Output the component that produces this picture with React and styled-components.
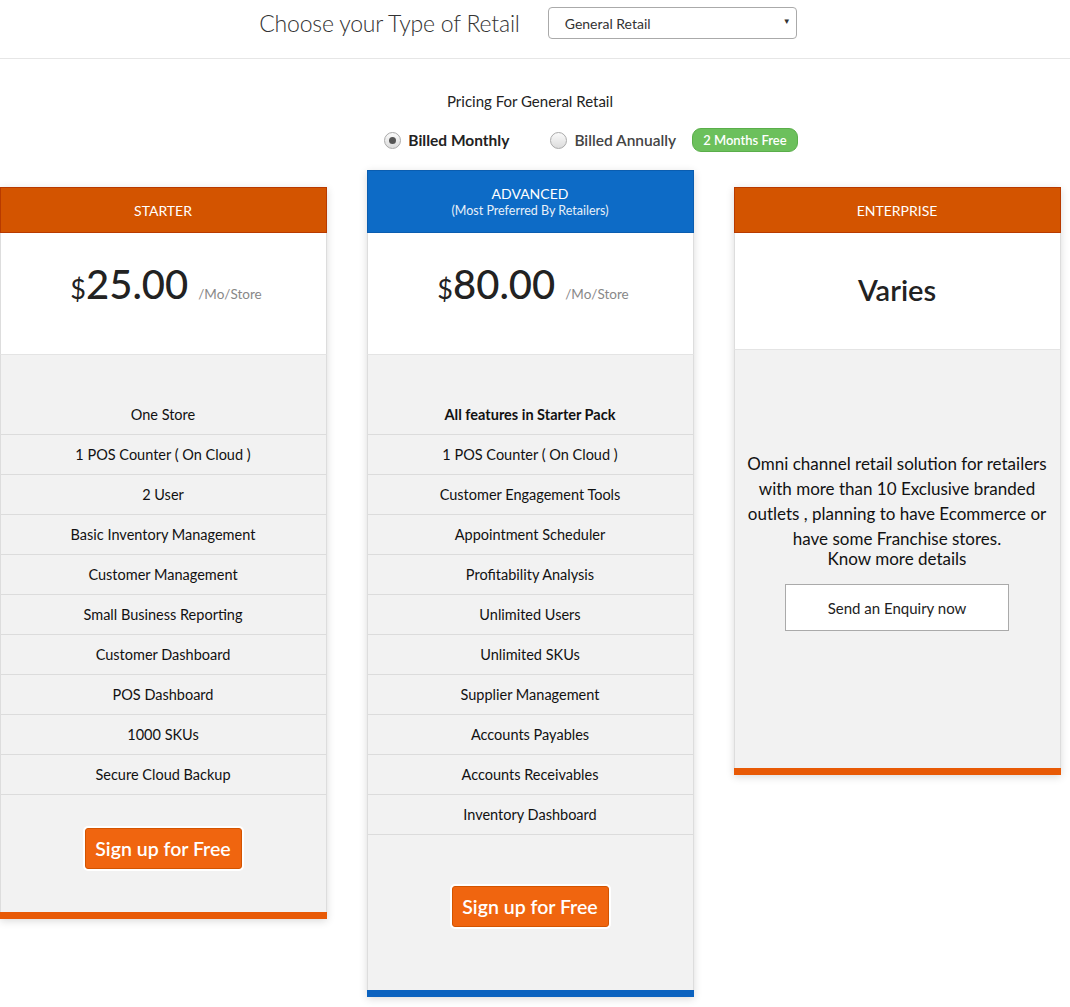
import React from "react";
import styled, { createGlobalStyle } from "styled-components";

const GlobalStyle = createGlobalStyle`
  html, body {
    margin: 0;
    padding: 0;
    background: #ffffff;
    font-family: Lato, "Noto Sans", "Liberation Sans", sans-serif;
    color: #222;
    overflow-x: hidden;
  }
`;

const ORANGE = "#d35400";
const BLUE = "#0d6bc6";

const Page = styled.div`
  width: 1070px;
  padding-bottom: 20px;
`;

const TopBar = styled.div`
  display: flex;
  align-items: center;
  justify-content: center;
  gap: 28px;
  height: 45px;
  padding: 0 14px 13px 0;
  border-bottom: 1px solid #e6e6e6;
`;

const TopTitle = styled.h1`
  margin: 0;
  font-weight: 300;
  font-size: 23px;
  color: #333;
  letter-spacing: -0.2px;
`;

const SelectBox = styled.div`
  position: relative;
  width: 231px;
  height: 30px;
  border: 1px solid #aaa;
  border-radius: 4px;
  padding-left: 16px;
  display: flex;
  align-items: center;
  font-size: 14px;
  color: #333;
  margin-top: 1px;
  &::after {
    content: "▼";
    position: absolute;
    right: 5px;
    top: 8px;
    font-size: 8px;
    color: #333;
  }
`;

const PricingHead = styled.div`
  display: flex;
  flex-direction: column;
  align-items: center;
  padding-top: 33px;
  padding-right: 10px;
`;

const PricingTitle = styled.div`
  font-size: 15px;
  color: #222;
`;

const BillingRow = styled.div`
  display: flex;
  align-items: center;
  margin-top: 18px;
  margin-left: 122px;
`;

const Radio = styled.span`
  display: inline-block;
  width: 15px;
  height: 15px;
  border-radius: 50%;
  border: 1px solid #aaa;
  background: linear-gradient(#fafafa, #dcdcdc);
  margin-right: 7px;
  position: relative;
  &::after {
    content: "";
    display: ${(p) => (p.checked ? "block" : "none")};
    position: absolute;
    left: 4px;
    top: 4px;
    width: 7px;
    height: 7px;
    border-radius: 50%;
    background: #555;
  }
`;

const BillLabel = styled.span`
  font-size: 15.5px;
  font-weight: ${(p) => (p.bold ? 700 : 600)};
  color: ${(p) => (p.bold ? "#222" : "#444")};
  margin-right: ${(p) => p.gap || 0}px;
`;

const Badge = styled.span`
  background: #6cc05c;
  color: #fff;
  font-size: 13px;
  font-weight: 600;
  border-radius: 9px;
  padding: 3px 10px;
  border: 1px solid #5aae4a;
`;

const Cards = styled.div`
  display: flex;
  justify-content: center;
  align-items: flex-start;
  gap: 40px;
  margin-top: 18px;
  padding-right: 10px;
`;

const Card = styled.div`
  width: 327px;
  flex-shrink: 0;
  margin-top: ${(p) => (p.featured ? 0 : 17)}px;
  box-shadow: 0 2px 8px rgba(0, 0, 0, 0.15);
  border-bottom: 7px solid ${(p) => p.accent};
`;

const CardHeader = styled.div`
  background: ${(p) => p.color};
  border: 1px solid ${(p) => (p.color === BLUE ? "#0a5db0" : "#b83a00")};
  color: #fff;
  height: ${(p) => (p.featured ? 61 : 44)}px;
  display: flex;
  flex-direction: column;
  align-items: center;
  justify-content: center;
  font-size: 14px;
  text-transform: uppercase;
`;

const SubTitle = styled.span`
  text-transform: none;
  font-size: 12.5px;
  opacity: 0.9;
  margin-top: 1px;
`;

const PriceBox = styled.div`
  background: #fff;
  height: ${(p) => p.h || 122}px;
  display: flex;
  align-items: center;
  justify-content: center;
  border-left: 1px solid #ddd;
  border-right: 1px solid #ddd;
  border-bottom: 1px solid #e4e4e4;
  box-sizing: border-box;
`;

const Price = styled.div`
  display: flex;
  align-items: baseline;
  margin-top: -19px;
  margin-left: 6px;
  color: #222;
`;

const Dollar = styled.span`
  font-size: 27px;
`;

const Amount = styled.span`
  font-size: 40px;
  font-weight: 500;
`;

const Per = styled.span`
  font-size: 13.5px;
  color: #888;
  margin-left: 10px;
`;

const Varies = styled.div`
  font-size: 29px;
  font-weight: 600;
  color: #222;
  margin-top: -4px;
`;

const Body = styled.div`
  background: #f2f2f2;
  border-left: 1px solid #ddd;
  border-right: 1px solid #ddd;
  padding-top: ${(p) => p.pt || 40}px;
  padding-bottom: ${(p) => p.pb || 0}px;
  display: flex;
  flex-direction: column;
  align-items: center;
`;

const FeatureList = styled.ul`
  list-style: none;
  margin: 0;
  padding: 0;
  width: 100%;
`;

const Feature = styled.li`
  height: 40px;
  line-height: 40px;
  text-align: center;
  font-size: 14.5px;
  font-weight: ${(p) => (p.bold ? 700 : 400)};
  color: #111;
  border-bottom: 1px solid #dcdcdc;
  box-sizing: border-box;
`;

const SignUp = styled.button`
  margin-top: ${(p) => p.mt}px;
  height: 41px;
  width: 157px;
  background: #f0650f;
  border: 1px solid #d35400;
  border-radius: 3px;
  box-shadow: 0 0 0 2px #fff;
  color: #fff;
  font-family: inherit;
  font-size: 19.5px;
  font-weight: 600;
  cursor: pointer;
`;

const EntText = styled.p`
  margin: 0;
  padding: 0 8px;
  text-align: center;
  font-size: 17px;
  line-height: 25px;
  color: #111;
`;

const KnowMore = styled.span`
  display: block;
  line-height: 16px;
`;

const Enquiry = styled.button`
  margin-top: 17px;
  width: 224px;
  height: 47px;
  background: #fff;
  border: 1px solid #aaa;
  font-family: inherit;
  font-size: 15px;
  color: #222;
  cursor: pointer;
`;

const starter = [
  "One Store",
  "1 POS Counter ( On Cloud )",
  "2 User",
  "Basic Inventory Management",
  "Customer Management",
  "Small Business Reporting",
  "Customer Dashboard",
  "POS Dashboard",
  "1000 SKUs",
  "Secure Cloud Backup",
];

const advanced = [
  "All features in Starter Pack",
  "1 POS Counter ( On Cloud )",
  "Customer Engagement Tools",
  "Appointment Scheduler",
  "Profitability Analysis",
  "Unlimited Users",
  "Unlimited SKUs",
  "Supplier Management",
  "Accounts Payables",
  "Accounts Receivables",
  "Inventory Dashboard",
];

export default function App() {
  return (
    <Page>
      <GlobalStyle />
      <TopBar>
        <TopTitle>Choose your Type of Retail</TopTitle>
        <SelectBox>General Retail</SelectBox>
      </TopBar>

      <PricingHead>
        <PricingTitle>Pricing For General Retail</PricingTitle>
        <BillingRow>
          <Radio checked />
          <BillLabel bold gap={41}>Billed Monthly</BillLabel>
          <Radio />
          <BillLabel gap={16}>Billed Annually</BillLabel>
          <Badge>2 Months Free</Badge>
        </BillingRow>
      </PricingHead>

      <Cards>
        <Card accent="#e85a06">
          <CardHeader color={ORANGE}>Starter</CardHeader>
          <PriceBox>
            <Price>
              <Dollar>$</Dollar>
              <Amount>25.00</Amount>
              <Per>/Mo/Store</Per>
            </Price>
          </PriceBox>
          <Body pb={43}>
            <FeatureList>
              {starter.map((f) => (
                <Feature key={f}>{f}</Feature>
              ))}
            </FeatureList>
            <SignUp mt={33}>Sign up for Free</SignUp>
          </Body>
        </Card>

        <Card featured accent="#0b62bf">
          <CardHeader color={BLUE} featured>
            Advanced
            <SubTitle>(Most Preferred By Retailers)</SubTitle>
          </CardHeader>
          <PriceBox>
            <Price>
              <Dollar>$</Dollar>
              <Amount>80.00</Amount>
              <Per>/Mo/Store</Per>
            </Price>
          </PriceBox>
          <Body pb={63}>
            <FeatureList>
              {advanced.map((f, i) => (
                <Feature key={f} bold={i === 0}>
                  {f}
                </Feature>
              ))}
            </FeatureList>
            <SignUp mt={51}>Sign up for Free</SignUp>
          </Body>
        </Card>

        <Card accent="#e85a06">
          <CardHeader color={ORANGE}>Enterprise</CardHeader>
          <PriceBox h={117}>
            <Varies>Varies</Varies>
          </PriceBox>
          <Body pt={101} pb={137}>
            <EntText>
              Omni channel retail solution for retailers with more than 10
              Exclusive branded outlets , planning to have Ecommerce or have
              some Franchise stores.
              <KnowMore>Know more details</KnowMore>
            </EntText>
            <Enquiry>Send an Enquiry now</Enquiry>
          </Body>
        </Card>
      </Cards>
    </Page>
  );
}
